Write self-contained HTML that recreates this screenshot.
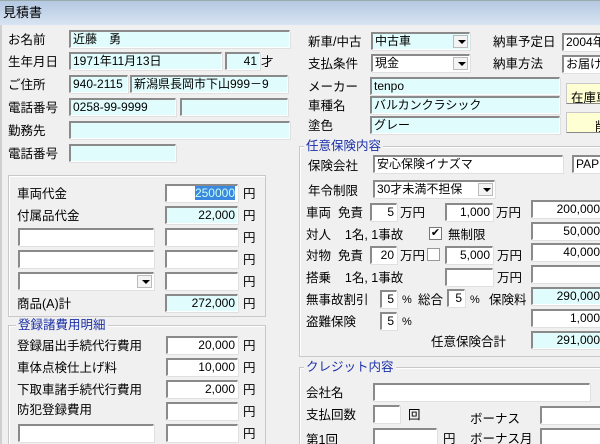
<!DOCTYPE html>
<html style="overflow:hidden;width:600px;height:444px"><head><meta charset="utf-8"><style>
*{margin:0;padding:0;box-sizing:border-box}
body{width:600px;height:444px;overflow:hidden;background:#f0f0f0;position:relative;font-family:"Liberation Sans","Noto Sans CJK JP",sans-serif;font-size:12.5px;color:#000}
.t{position:absolute;white-space:nowrap;line-height:14px}
.f{position:absolute;height:18px;background:#fff;border-top:2px solid #8a8a8a;border-left:2px solid #8a8a8a;border-bottom:1px solid #fff;border-right:1px solid #fff;box-shadow:1px 1px 0 #e0e0e0;font-size:12px;line-height:15px;padding:0 2px;white-space:nowrap;overflow:hidden}
.c{background:#e0fcfc}
.r{text-align:right}
.dd{position:absolute;right:1px;top:1px;width:15px;height:13px;background:#f4f4f4;border:1px solid #bbb}
.dd:after{content:"";position:absolute;left:4px;top:4px;border-left:4px solid transparent;border-right:4px solid transparent;border-top:4px solid #000}
.g{position:absolute;border:1px solid #c8c8c8;box-shadow:inset 1px 1px 0 #fff}
.lg{position:absolute;background:#f0f0f0;color:#1a2fa8;padding:0 2px;line-height:14px;white-space:nowrap}
.btn{position:absolute;background:#ffffd4;border:1px solid #c8c8c8;border-bottom-color:#888;border-right-color:#888;padding:3px 4px;white-space:nowrap;overflow:hidden}
.cb{position:absolute;width:13px;height:13px;background:#fff;border:1px solid #777;font-size:11px;line-height:11px;text-align:center}
</style></head><body>
<div style="position:absolute;left:0;top:0;width:600px;height:25px;background:linear-gradient(#b4c8e2,#d8e4f2);border-top:1px solid #9aa"></div>
<div class="t" style="left:3px;top:6px;font-size:13px">見積書</div>
<div style="position:absolute;left:0;top:25px;width:2px;height:419px;background:#d0d0d0"></div>

<div class="t" style="left:8px;top:33px">お名前</div><div class="f c" style="left:69px;top:30px;width:221px">近藤　勇</div>
<div class="t" style="left:8px;top:55px">生年月日</div><div class="f c" style="left:69px;top:52px;width:153px">1971年11月13日</div><div class="f c r" style="left:225px;top:52px;width:35px">41</div><div class="t" style="left:261px;top:55px">才</div>
<div class="t" style="left:8px;top:78px">ご住所</div><div class="f c" style="left:69px;top:75px;width:59px">940-2115</div><div class="f c" style="left:130px;top:75px;width:158px">新潟県長岡市下山999－9</div>
<div class="t" style="left:8px;top:101px">電話番号</div><div class="f c" style="left:69px;top:98px;width:107px">0258-99-9999</div><div class="f c" style="left:180px;top:98px;width:108px"></div>
<div class="t" style="left:8px;top:124px">勤務先</div><div class="f c" style="left:69px;top:121px;width:221px"></div>
<div class="t" style="left:8px;top:147px">電話番号</div><div class="f c" style="left:69px;top:144px;width:107px"></div>

<div class="g" style="left:8px;top:175px;width:258px;height:142px"></div>
<div class="t" style="left:17px;top:187px">車両代金</div><div class="f r" style="left:165px;top:184px;width:73px"><span style="background:#3a88e0;color:#cfe">250000</span></div><div class="t" style="left:243px;top:187px">円</div>
<div class="t" style="left:17px;top:209px">付属品代金</div><div class="f c r" style="left:165px;top:206px;width:73px">22,000</div><div class="t" style="left:243px;top:209px">円</div>
<div class="f" style="left:18px;top:228px;width:136px"></div><div class="f" style="left:165px;top:228px;width:73px"></div><div class="t" style="left:243px;top:231px">円</div>
<div class="f" style="left:18px;top:250px;width:136px"></div><div class="f" style="left:165px;top:250px;width:73px"></div><div class="t" style="left:243px;top:253px">円</div>
<div class="f" style="left:18px;top:272px;width:136px"><div class="dd"></div></div><div class="f" style="left:165px;top:272px;width:73px"></div><div class="t" style="left:243px;top:275px">円</div>
<div class="t" style="left:17px;top:297px">商品(A)計</div><div class="f c r" style="left:165px;top:294px;width:73px">272,000</div><div class="t" style="left:243px;top:297px">円</div>

<div class="g" style="left:8px;top:325px;width:258px;height:125px"></div>
<div class="lg" style="left:16px;top:318px">登録諸費用明細</div>
<div class="t" style="left:17px;top:339px">登録届出手続代行費用</div><div class="f r" style="left:166px;top:336px;width:72px">20,000</div><div class="t" style="left:243px;top:339px">円</div>
<div class="t" style="left:17px;top:361px">車体点検仕上げ料</div><div class="f r" style="left:166px;top:358px;width:72px">10,000</div><div class="t" style="left:243px;top:361px">円</div>
<div class="t" style="left:17px;top:383px">下取車諸手続代行費用</div><div class="f r" style="left:166px;top:380px;width:72px">2,000</div><div class="t" style="left:243px;top:383px">円</div>
<div class="t" style="left:17px;top:403px">防犯登録費用</div><div class="f" style="left:166px;top:402px;width:72px"></div><div class="t" style="left:243px;top:405px">円</div>
<div class="f" style="left:18px;top:424px;width:136px"></div><div class="f" style="left:166px;top:424px;width:72px"></div><div class="t" style="left:243px;top:427px">円</div>

<div class="t" style="left:308px;top:35px">新車/中古</div><div class="f c" style="left:371px;top:32px;width:99px">中古車<div class="dd"></div></div>
<div class="t" style="left:493px;top:35px">納車予定日</div><div class="f" style="left:562px;top:33px;width:40px">2004年</div>
<div class="t" style="left:308px;top:57px">支払条件</div><div class="f" style="left:371px;top:54px;width:99px">現金<div class="dd"></div></div>
<div class="t" style="left:493px;top:57px">納車方法</div><div class="f" style="left:562px;top:55px;width:40px">お届け</div>
<div class="t" style="left:308px;top:80px">メーカー</div><div class="f c" style="left:370px;top:77px;width:190px">tenpo</div>
<div class="t" style="left:308px;top:99px">車種名</div><div class="f c" style="left:370px;top:96px;width:190px">バルカンクラシック</div>
<div class="t" style="left:308px;top:119px">塗色</div><div class="f c" style="left:370px;top:116px;width:190px">グレー</div>
<div class="btn" style="left:566px;top:83px;width:40px;height:21px">在庫車</div>
<div class="btn" style="left:566px;top:112px;width:40px;height:21px;padding-left:28px">削</div>

<div class="g" style="left:299px;top:146px;width:310px;height:211px"></div>
<div class="lg" style="left:304px;top:139px">任意保険内容</div>
<div class="t" style="left:308px;top:159px">保険会社</div><div class="f" style="left:373px;top:155px;width:190px">安心保険イナズマ</div><div class="f" style="left:572px;top:155px;width:32px">PAP</div>
<div class="t" style="left:308px;top:184px">年令制限</div><div class="f" style="left:373px;top:180px;width:122px">30才未満不担保<div class="dd"></div></div>
<div class="t" style="left:306px;top:206px">車両&nbsp; 免責</div><div class="f r" style="left:370px;top:203px;width:27px">5</div><div class="t" style="left:400px;top:206px">万円</div><div class="f r" style="left:445px;top:203px;width:48px">1,000</div><div class="t" style="left:496px;top:206px">万円</div><div class="f r" style="left:531px;top:200px;width:72px">200,000</div>
<div class="t" style="left:306px;top:228px">対人&nbsp;&nbsp;&nbsp; 1名, 1事故</div><div class="cb" style="left:429px;top:227px">✔</div><div class="t" style="left:448px;top:228px">無制限</div><div class="f r" style="left:531px;top:222px;width:72px">50,000</div>
<div class="t" style="left:306px;top:249px">対物&nbsp; 免責</div><div class="f r" style="left:370px;top:246px;width:27px">20</div><div class="t" style="left:400px;top:249px">万円</div><div class="cb" style="left:427px;top:248px;border-color:#999"></div><div class="f r" style="left:445px;top:246px;width:48px">5,000</div><div class="t" style="left:497px;top:249px">万円</div><div class="f r" style="left:531px;top:243px;width:72px">40,000</div>
<div class="t" style="left:306px;top:271px">搭乗&nbsp;&nbsp;&nbsp; 1名, 1事故</div><div class="f" style="left:445px;top:268px;width:48px"></div><div class="t" style="left:497px;top:271px">万円</div><div class="f" style="left:531px;top:265px;width:72px"></div>
<div class="t" style="left:306px;top:293px">無事故割引</div><div class="f r" style="left:380px;top:290px;width:17px">5</div><div class="t" style="left:402px;top:293px;font-size:11px">%</div><div class="t" style="left:418px;top:293px">総合</div><div class="f r" style="left:447px;top:289px;width:18px">5</div><div class="t" style="left:470px;top:293px;font-size:11px">%</div><div class="t" style="left:489px;top:293px">保険料</div><div class="f c r" style="left:531px;top:287px;width:72px">290,000</div>
<div class="t" style="left:306px;top:315px">盗難保険</div><div class="f r" style="left:380px;top:312px;width:17px">5</div><div class="t" style="left:402px;top:315px;font-size:11px">%</div><div class="f r" style="left:531px;top:309px;width:72px">1,000</div>
<div class="t" style="left:431px;top:335px">任意保険合計</div><div class="f c r" style="left:531px;top:331px;width:72px">291,000</div>

<div class="g" style="left:299px;top:367px;width:310px;height:85px"></div>
<div class="lg" style="left:304px;top:360px">クレジット内容</div>
<div class="t" style="left:306px;top:386px">会社名</div><div class="f" style="left:373px;top:383px;width:217px"></div>
<div class="t" style="left:306px;top:408px">支払回数</div><div class="f" style="left:373px;top:405px;width:27px"></div><div class="t" style="left:408px;top:408px">回</div><div class="t" style="left:470px;top:412px">ボーナス</div><div class="f" style="left:540px;top:406px;width:64px"></div>
<div class="t" style="left:306px;top:433px">第1回</div><div class="f" style="left:373px;top:428px;width:64px"></div><div class="t" style="left:443px;top:432px">円</div><div class="t" style="left:470px;top:432px">ボーナス月</div><div class="f" style="left:540px;top:428px;width:64px"></div>
</body></html>
